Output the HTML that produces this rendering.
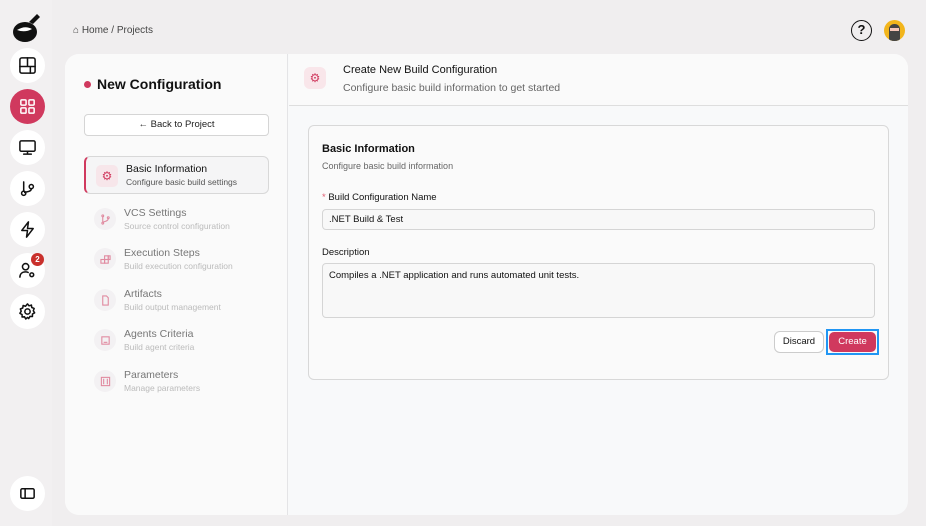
<!DOCTYPE html>
<html><head><meta charset="utf-8"><style>
*{box-sizing:border-box;margin:0;padding:0}
body{width:926px;height:526px;overflow:hidden;background:#f0eeef;font-family:"Liberation Sans",sans-serif;position:relative;color:#111}
.side{position:absolute;left:0;top:0;width:52px;height:526px;background:#f2f0f1}
.ic{position:absolute;left:10px;width:35px;height:35px;border-radius:50%;background:#fff;display:flex;align-items:center;justify-content:center}
.ic svg{width:19px;height:19px;fill:none;stroke:#111;stroke-width:1.6;stroke-linecap:round;stroke-linejoin:round}
.card{position:absolute;left:65px;top:54px;width:843px;height:461px;background:#f8f9fa;border-radius:14px;overflow:hidden}
.left{position:absolute;left:0;top:0;width:223px;height:461px;background:#fafafa;border-right:1px solid #e4e4e6}
.hdr{position:absolute;left:224px;top:0;right:0;height:52px;background:#fafafa;border-bottom:1px solid #dedede}
.step{position:absolute;left:19px;width:185px;height:38px}
.step .i{position:absolute;left:10px;top:8px;width:22px;height:22px;border-radius:50%;background:#f3f1f3;display:flex;align-items:center;justify-content:center}
.step .i svg{width:11px;height:11px;fill:none;stroke:#e08aa0;stroke-width:1.2}
.step .t{position:absolute;left:40px;top:7px;font-size:10.5px;color:#777}
.step .s{position:absolute;left:40px;top:21px;font-size:8.5px;color:#bbb}
.box{position:absolute;left:243px;top:71px;width:581px;height:255px;border:1px solid #d8d8d8;border-radius:6px;background:#fafafa}
.fld{position:absolute;left:13px;width:553px;border:1px solid #d5d5d5;border-radius:4px;background:#f8f8f8;font-size:9.5px;padding-left:6px}
</style></head><body>
<div class="side">
 <svg style="position:absolute;left:11px;top:8px" width="32" height="36" viewBox="0 0 32 36"><ellipse cx="14" cy="24" rx="12" ry="10" fill="#111"/><path d="M18 14 L26 6 L29 9 L22 16Z" fill="#111"/><path d="M6 22 Q14 17 21 21 Q14 25 6 22Z" fill="#fff"/></svg>
 <div class="ic" style="top:48px"><svg viewBox="0 0 20 20"><rect x="2" y="2" width="16" height="16" rx="2"/><path d="M2 11h16M10 11V2M13 11v7"/></svg></div>
 <div class="ic" style="top:89px;background:#d0395e"><svg viewBox="0 0 20 20" style="stroke:#fff"><rect x="3" y="3" width="5.5" height="5.5" rx="1"/><rect x="11.5" y="3" width="5.5" height="5.5" rx="1"/><rect x="3" y="11.5" width="5.5" height="5.5" rx="1"/><rect x="11.5" y="11.5" width="5.5" height="5.5" rx="1"/></svg></div>
 <div class="ic" style="top:130px"><svg viewBox="0 0 20 20"><rect x="2" y="3" width="16" height="11" rx="1.5"/><path d="M10 14v3M6 17h8"/></svg></div>
 <div class="ic" style="top:171px"><svg viewBox="0 0 20 20"><circle cx="6" cy="15" r="2.2"/><circle cx="14" cy="8" r="2.2"/><path d="M6 3v9.8M14 10.2c0 3-4 3-7 4"/></svg></div>
 <div class="ic" style="top:212px"><svg viewBox="0 0 20 20"><path d="M11 2L4 11h6l-1 7 7-9h-6z"/></svg></div>
 <div class="ic" style="top:253px"><svg viewBox="0 0 20 20"><circle cx="8" cy="6" r="3.3"/><path d="M2 17c0-3.5 2.5-5.5 6-5.5 1 0 2 .2 2.7.5"/><circle cx="14.5" cy="14.5" r="2"/></svg></div>
 <div style="position:absolute;left:31px;top:253px;width:13px;height:13px;border-radius:50%;background:#c9302c;color:#fff;font-size:8px;font-weight:bold;text-align:center;line-height:13px">2</div>
 <div class="ic" style="top:294px"><svg viewBox="0 0 20 20"><circle cx="10" cy="10" r="2.8"/><path d="M10 2l1.6 2 2.5-.8.4 2.6 2.5 1-.9 2.4 1.4 2.2-2.3 1.3v2.6l-2.6-.2-1.3 2.3L10 16.2l-1.8 1.7-1.3-2.3-2.6.2v-2.6L2 11.9l1.4-2.2-.9-2.4 2.5-1 .4-2.6 2.5.8z"/></svg></div>
 <div class="ic" style="top:476px"><svg viewBox="0 0 20 20"><rect x="3" y="5" width="14" height="10" rx="1.5"/><path d="M7.5 5v10"/></svg></div>
</div>
<div style="position:absolute;left:73px;top:25px;font-size:10px;color:#444">⌂ Home / Projects</div>
<div style="position:absolute;left:851px;top:20px;width:21px;height:21px;border:1.8px solid #111;border-radius:50%;text-align:center;font-size:13px;font-weight:bold;line-height:18px">?</div>
<div style="position:absolute;left:884px;top:20px;width:21px;height:21px;border-radius:50%;background:#f2b51c;overflow:hidden"><div style="position:absolute;left:5px;top:4px;width:11px;height:17px;background:#444;border-radius:5px 5px 2px 2px"></div><div style="position:absolute;left:6px;top:8px;width:9px;height:3px;background:#f6c6b8"></div></div>
<div class="card">
 <div class="left">
  <div style="position:absolute;left:19px;top:27px;width:7px;height:7px;border-radius:50%;background:#d0395e"></div>
  <div style="position:absolute;left:32px;top:22px;font-size:14px;font-weight:bold">New Configuration</div>
  <div style="position:absolute;left:19px;top:60px;width:185px;height:22px;border:1px solid #d5d5d5;border-radius:4px;background:#fff;text-align:center;font-size:9.5px;line-height:20px;color:#222">← Back to Project</div>
  <div class="step" style="top:102px;border:1px solid #d8d8d8;border-left:2px solid #d0395e;border-radius:6px;background:#f5f5f6"><div class="i" style="border-radius:5px;background:#f7e6ea;color:#d0395e;font-size:12px;text-align:center;line-height:22px">⚙</div><div class="t" style="color:#111;top:6px">Basic Information</div><div class="s" style="color:#555;top:20px">Configure basic build settings</div></div>
  <div class="step" style="top:146px"><div class="i"><svg viewBox="0 0 12 12"><circle cx="3" cy="2" r="1"/><circle cx="3" cy="10" r="1"/><circle cx="9" cy="4" r="1"/><path d="M3 3v6M9 5c0 3-4 3-6 4"/></svg></div><div class="t">VCS Settings</div><div class="s">Source control configuration</div></div>
  <div class="step" style="top:186px"><div class="i"><svg viewBox="0 0 12 12"><rect x="1" y="6" width="4" height="4"/><rect x="5" y="6" width="4" height="4"/><rect x="5" y="2" width="4" height="4"/><rect x="9" y="2" width="2" height="4"/></svg></div><div class="t">Execution Steps</div><div class="s">Build execution configuration</div></div>
  <div class="step" style="top:227px"><div class="i"><svg viewBox="0 0 12 12"><path d="M3 1h4l2 2v8H3z"/></svg></div><div class="t">Artifacts</div><div class="s">Build output management</div></div>
  <div class="step" style="top:267px"><div class="i"><svg viewBox="0 0 12 12"><rect x="2" y="2" width="8" height="8"/><path d="M4 8h4"/></svg></div><div class="t">Agents Criteria</div><div class="s">Build agent criteria</div></div>
  <div class="step" style="top:308px"><div class="i"><svg viewBox="0 0 12 12"><rect x="1.5" y="1.5" width="9" height="9"/><path d="M4 3v6M8 3v6"/></svg></div><div class="t">Parameters</div><div class="s">Manage parameters</div></div>
 </div>
 <div class="hdr">
  <div style="position:absolute;left:15px;top:13px;width:22px;height:22px;border-radius:6px;background:#f9e6ea;color:#d0395e;font-size:12px;text-align:center;line-height:22px">⚙</div>
  <div style="position:absolute;left:54px;top:10px;font-size:11px;color:#111">Create New Build Configuration</div>
  <div style="position:absolute;left:54px;top:28px;font-size:10.5px;color:#666">Configure basic build information to get started</div>
 </div>
 <div class="box">
  <div style="position:absolute;left:13px;top:17px;font-size:11px;font-weight:bold;color:#111">Basic Information</div>
  <div style="position:absolute;left:13px;top:35px;font-size:9px;color:#666">Configure basic build information</div>
  <div style="position:absolute;left:13px;top:66px;font-size:9.5px"><span style="color:#e05a70">*</span> Build Configuration Name</div>
  <div class="fld" style="top:83px;height:21px;line-height:19px">.NET Build &amp; Test</div>
  <div style="position:absolute;left:13px;top:121px;font-size:9.5px">Description</div>
  <div class="fld" style="top:137px;height:55px;padding-top:6px">Compiles a .NET application and runs automated unit tests.</div>
  <div style="position:absolute;left:465px;top:205px;width:50px;height:22px;border:1px solid #ccc;border-radius:6px;background:#fff;font-size:9.5px;text-align:center;line-height:20px">Discard</div>
  <div style="position:absolute;left:517px;top:203px;width:53px;height:26px;border:2px solid #2196f3;padding:1px"><div style="width:100%;height:100%;background:#d0395e;border-radius:5px;color:#fff;font-size:9.5px;text-align:center;line-height:20px">Create</div></div>
 </div>
</div>
</body></html>
